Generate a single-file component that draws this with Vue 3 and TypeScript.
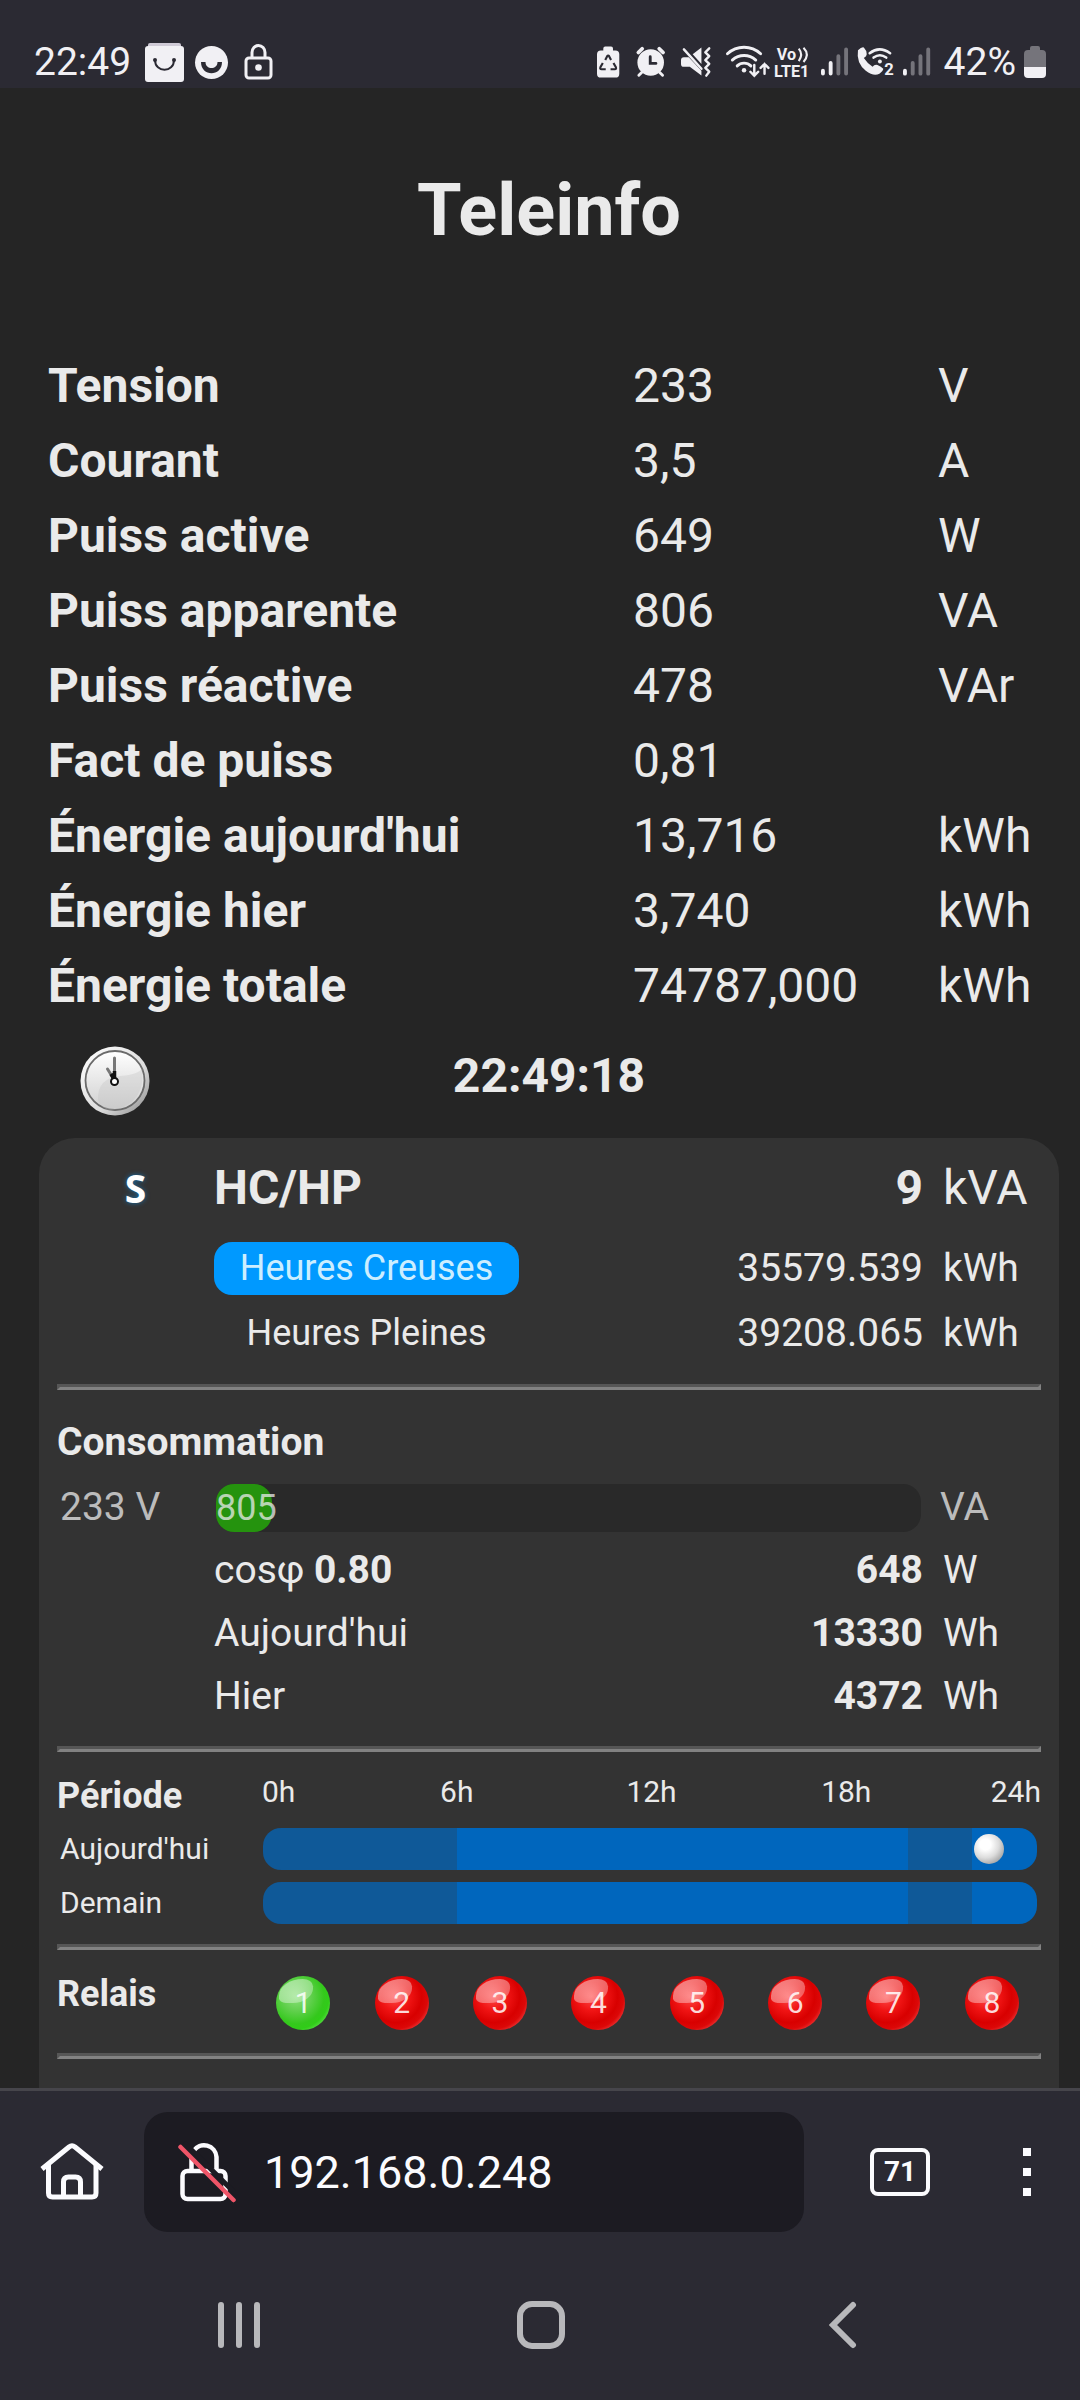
<script setup lang="ts">
import { ref } from 'vue'

interface Reading { label: string; value: string; unit: string }
interface Segment { kind: 'low' | 'high'; hours: number }

const readings: Reading[] = [
  { label: 'Tension', value: '233', unit: 'V' },
  { label: 'Courant', value: '3,5', unit: 'A' },
  { label: 'Puiss active', value: '649', unit: 'W' },
  { label: 'Puiss apparente', value: '806', unit: 'VA' },
  { label: 'Puiss réactive', value: '478', unit: 'VAr' },
  { label: 'Fact de puiss', value: '0,81', unit: '' },
  { label: "Énergie aujourd'hui", value: '13,716', unit: 'kWh' },
  { label: 'Énergie hier', value: '3,740', unit: 'kWh' },
  { label: 'Énergie totale', value: '74787,000', unit: 'kWh' },
]

const tariffs = [
  { name: 'Heures Creuses', total: '35579.539', active: true },
  { name: 'Heures Pleines', total: '39208.065', active: false },
]

const loadPercent = 8

const hours = ['0h', '6h', '12h', '18h', '24h']
const schedule: Segment[] = [
  { kind: 'low', hours: 6 },
  { kind: 'high', hours: 14 },
  { kind: 'low', hours: 2 },
  { kind: 'high', hours: 2 },
]
const days = [
  { name: "Aujourd'hui", marker: 91.8 },
  { name: 'Demain', marker: null },
]

const relays = [1, 2, 3, 4, 5, 6, 7, 8].map((id) => ({ id, on: id === 1 }))

const address = ref('192.168.0.248')
</script>

<template>
  <div class="screen">
    <header class="status">
      <span class="status-time">22:49</span>
      <svg class="ic" width="39" height="36" viewBox="0 0 39 36">
        <path d="M3 3V1q0-2 2-2h29q2 0 2 2v2z" fill="#cfcad6" />
        <rect y="2" width="39" height="36" rx="3" fill="#f1f0f4" />
        <path d="M10 16C10 29 29 29 29 16" fill="none" stroke="#2b2a33" stroke-width="2" />
        <circle cx="10" cy="16" r="2" fill="#2b2a33" />
        <circle cx="29" cy="16" r="2" fill="#2b2a33" />
      </svg>
      <svg class="ic" width="37" height="36" viewBox="0 0 37 36">
        <circle cx="19.500" cy="18.500" r="16.500" fill="#f1f0f4" />
        <path d="M9 18H13.500C13.500 26 25.500 26 25.500 18H30C30 33 9 33 9 18Z" fill="#2b2a33" />
      </svg>
      <svg class="ic" width="36" height="36" viewBox="0 0 36 36" fill="none" stroke="#f1f0f4" stroke-width="3">
        <rect x="9" y="14" width="25" height="20" rx="3" />
        <path d="M15 13V8.500a6.500 7 0 0 1 13 0V13" />
        <circle cx="21.500" cy="23.500" r="3.300" fill="#f1f0f4" stroke="none" />
      </svg>
      <span class="spacer"></span>
      <svg class="ic" width="31" height="36" viewBox="0 0 32 36">
        <path d="M6.500 6V4q0-2 2-2h6q2 0 2 2v2H19q4 0 4 4v20q0 4-4 4H4q-4 0-4-4V10q0-4 4-4z" fill="#f1f0f4" />
        <path d="M8.500 16l2-4q1-1.500 2 0l2 4M17 19l2.500 4.500q.8 2-1.200 2h-4.300M9 25.500H4.700q-2 0-1.200-2L6 19" fill="none" stroke="#2b2a33" stroke-width="2.200" />
      </svg>
      <svg class="ic" width="37" height="36" viewBox="0 0 39 36" fill="none" stroke="#f1f0f4" stroke-width="4" stroke-linecap="round">
        <circle cx="15.500" cy="18.500" r="14" fill="#f1f0f4" stroke="none" />
        <path d="M2.500 8l4-4M28.500 8l-4-4" />
        <path d="M6 29l-3 3M25 29l3 3" stroke-width="3" />
        <path d="M15 12.500v7h6" stroke="#2b2a33" stroke-width="3" />
      </svg>
      <svg class="ic" width="36" height="36" viewBox="0 0 37 36">
        <path d="M0 16q0-3 3-3h5l13 14v5L9 23H3q-3 0-3-3zM12 10l9-7v17z" fill="#f1f0f4" />
        <path d="M3 5l18 20" stroke="#f1f0f4" stroke-width="2.500" stroke-linecap="round" />
        <path d="M29 4l-4 4 4 4-4 4 4 4-4 4 4 4-3 4" fill="none" stroke="#f1f0f4" stroke-width="2.500" stroke-linejoin="round" stroke-linecap="round" />
      </svg>
      <svg class="ic" width="41" height="36" viewBox="0 0 42 36" fill="none" stroke="#f1f0f4" stroke-width="3" stroke-linecap="round">
        <path d="M2.500 9.500A25 25 0 0 1 36.500 9.500M7.500 16A18 18 0 0 1 31.500 16M12.500 22A10 10 0 0 1 26.500 22" />
        <circle cx="19.500" cy="26.500" r="2.300" fill="#f1f0f4" stroke="none" />
        <path d="M30 21v11m-4-4l4 4 4-4M40.500 30V20m-4 4l4-4 4 4" stroke-width="2.500" />
      </svg>
      <svg class="ic" width="39" height="36" viewBox="0 0 41 36" fill="#f1f0f4">
        <text x="3" y="16" class="tiny">Vo</text>
        <text x="0" y="34" class="tiny">LTE1</text>
        <path d="M26 4q5 6 0 13M31 3q7 7 0 15" fill="none" stroke="#f1f0f4" stroke-width="2.200" />
      </svg>
      <svg class="ic" width="28" height="36" viewBox="0 0 29 36" stroke="#f1f0f4" stroke-width="4" stroke-linecap="round">
        <path d="M2 27v3M10 19v11" />
        <path d="M18 12v18M26 5v25" stroke="#75747b" />
      </svg>
      <svg class="ic" width="38" height="36" viewBox="0 0 39 36" fill="none" stroke="#f1f0f4" stroke-width="2.600">
        <path d="M1 6q4-4 6-3 3 3 3 7 0 2-3 4 4 6 9 9 2-3 5-2 3 1 6 4 0 2-4 5-6 3-14-3Q-1 19 1 6z" fill="#f1f0f4" stroke="none" />
        <path d="M13 9q10-8 21 0M17 13.500q6.500-5 13 0" stroke-linecap="round" />
        <circle cx="23.500" cy="17.500" r="2" fill="#f1f0f4" stroke="none" />
        <text x="28" y="31" class="tiny two">2</text>
      </svg>
      <svg class="ic" width="33" height="36" viewBox="0 0 34 36" stroke="#75747b" stroke-width="4" stroke-linecap="round">
        <path d="M2 27v3" stroke="#f1f0f4" />
        <path d="M10 19v11M18 12v18M26 5v25" />
      </svg>
      <span class="status-percent">42%</span>
      <svg class="ic" width="22" height="36" viewBox="0 0 22 36">
        <path d="M6 6V4q0-2 2-2h6q2 0 2 2v2h2q4 0 4 4v13H0V10q0-4 4-4z" fill="#75747b" />
        <path d="M0 23h22v7q0 4-4 4H4q-4 0-4-4z" fill="#f1f0f4" />
      </svg>
    </header>

    <main class="page">
      <h1>Teleinfo</h1>

      <table class="readings">
        <colgroup><col /><col class="c-value" /><col class="c-unit" /></colgroup>
        <tbody>
          <tr v-for="r in readings" :key="r.label">
            <th scope="row">{{ r.label }}</th>
            <td>{{ r.value }}</td>
            <td>{{ r.unit }}</td>
          </tr>
        </tbody>
      </table>

      <div class="clock-row">
        <svg class="clock" width="70" height="70" viewBox="0 0 70 70" aria-hidden="true">
          <defs>
            <linearGradient id="rim" x1="0" y1="0" x2="1" y2="1">
              <stop offset="0" stop-color="#fff" /><stop offset=".6" stop-color="#ddd" /><stop offset="1" stop-color="#888" />
            </linearGradient>
            <linearGradient id="face" x1="0" y1="0" x2="0" y2="1">
              <stop offset="0" stop-color="#fff" /><stop offset="1" stop-color="#cfcfcf" />
            </linearGradient>
          </defs>
          <circle cx="35" cy="35" r="34.500" fill="url(#rim)" />
          <circle cx="35" cy="34.500" r="29.500" fill="url(#face)" stroke="#6a6a6a" stroke-width="1.800" />
          <path d="M18 54Q17 32 40 30T62 20Q66 50 45 60T18 54z" fill="#c4c4c4" opacity=".35" />
          <path d="M34.500 31V12M32.500 31L27.500 23" stroke="#777" stroke-width="3" stroke-linecap="round" />
          <path d="M34.500 34V25M34.500 34L31 28" stroke="#111" stroke-width="3.500" />
          <circle cx="34.500" cy="35.500" r="3.500" fill="#fff" stroke="#111" stroke-width="2" />
        </svg>
        <strong class="time">22:49:18</strong>
      </div>

      <section class="panel">
        <table class="grid">
          <colgroup><col class="g-side" /><col /><col /><col class="g-unit" /></colgroup>
          <tbody>
            <tr class="contract">
              <td class="mark">S</td>
              <th scope="row">HC/HP</th>
              <td class="num strong">9</td>
              <td class="unit">kVA</td>
            </tr>
            <tr v-for="t in tariffs" :key="t.name" class="tariff">
              <td></td>
              <td><span class="pill" :class="{ active: t.active }">{{ t.name }}</span></td>
              <td class="num">{{ t.total }}</td>
              <td class="unit">kWh</td>
            </tr>
          </tbody>
        </table>

        <hr />

        <h2 class="title">Consommation</h2>
        <table class="grid">
          <colgroup><col class="g-side" /><col /><col /><col class="g-unit" /></colgroup>
          <tbody>
            <tr>
              <td class="phase">233 V</td>
              <td colspan="2">
                <div class="bar"><div class="fill" :style="{ width: loadPercent + '%' }">805</div></div>
              </td>
              <td class="unit dim">VA</td>
            </tr>
            <tr><td></td><td>cosφ <b>0.80</b></td><td class="num strong">648</td><td class="unit">W</td></tr>
            <tr><td></td><td>Aujourd'hui</td><td class="num strong">13330</td><td class="unit">Wh</td></tr>
            <tr><td></td><td>Hier</td><td class="num strong">4372</td><td class="unit">Wh</td></tr>
          </tbody>
        </table>

        <hr />

        <div class="period">
          <div class="period-head">
            <h2>Période</h2>
            <div class="hours"><span v-for="h in hours" :key="h">{{ h }}</span></div>
          </div>
          <div v-for="d in days" :key="d.name" class="day">
            <span class="day-name">{{ d.name }}</span>
            <div class="track">
              <span
                v-for="(s, i) in schedule"
                :key="i"
                class="slot"
                :class="s.kind"
                :style="{ width: (s.hours / 24) * 100 + '%' }"
              ></span>
              <span v-if="d.marker !== null" class="marker" :style="{ left: d.marker + '%' }"></span>
            </div>
          </div>
        </div>

        <hr />

        <div class="relays">
          <h2>Relais</h2>
          <ul>
            <li v-for="r in relays" :key="r.id"><span class="led" :class="{ on: r.on }"><i>{{ r.id }}</i></span></li>
          </ul>
        </div>

        <hr />
      </section>
    </main>

    <footer>
      <div class="toolbar">
        <button class="home" type="button" aria-label="Accueil">
          <svg width="64" height="58" viewBox="0 0 64 58" fill="none" stroke="#fbfbfe" stroke-width="5">
            <path d="M2 26L29 4q3-2.500 6 0L62 26" />
            <path d="M8.500 22V50q0 4 4 4H52q4 0 4-4V22M23.500 54V39q0-5 5-5h7q5 0 5 5V54" />
          </svg>
        </button>
        <label class="url">
          <svg width="58" height="62" viewBox="0 0 58 62" fill="none" stroke="#fbfbfe" stroke-width="4.500">
            <rect x="4.500" y="30" width="43" height="28" rx="5" />
            <path d="M13.500 30V17M15.500 10A12.500 12.500 0 0 1 38.500 16V30" />
            <path d="M6 1.500L61 56" stroke="#1c1b22" stroke-width="5" />
            <path d="M2.500 6L55.500 59" stroke="#ef5568" stroke-width="4.500" stroke-linecap="round" />
          </svg>
          <input v-model="address" type="text" aria-label="Adresse" />
        </label>
        <button class="tabs" type="button" aria-label="Onglets"><span>71</span></button>
        <button class="menu" type="button" aria-label="Menu"><i></i><i></i><i></i></button>
      </div>
      <nav class="system">
        <button type="button" aria-label="Récents">
          <svg width="42" height="48" viewBox="0 0 42 48" stroke="#b8b8bb" stroke-width="6" stroke-linecap="round"><path d="M3 4v40M21 4v40M39 4v40" /></svg>
        </button>
        <button type="button" aria-label="Écran d'accueil">
          <svg width="48" height="48" viewBox="0 0 48 48" fill="none" stroke="#b8b8bb" stroke-width="6"><rect x="3" y="3" width="42" height="42" rx="12" /></svg>
        </button>
        <button type="button" aria-label="Retour">
          <svg width="28" height="48" viewBox="0 0 28 48" fill="none" stroke="#b8b8bb" stroke-width="6" stroke-linecap="round"><path d="M24 4L4 24l20 20" /></svg>
        </button>
      </nav>
    </footer>
  </div>
</template>

<style>
body {
  background: #252525;
}
</style>

<style scoped>
.screen {
  display: flex;
  flex-direction: column;
  min-height: 100vh;
  background: #252525;
  color: #eaeaea;
  font-family: Roboto, 'Liberation Sans', sans-serif;
  font-size: 39px;
}
button {
  display: flex;
  align-items: center;
  justify-content: center;
  padding: 0;
  border: 0;
  background: none;
  color: inherit;
  font-family: inherit;
}

/* Status bar */
.status {
  display: flex;
  align-items: center;
  gap: 8px;
  height: 52px;
  padding: 36px 34px 0;
  background: #2b2a33;
  color: #f1f0f4;
  line-height: 46px;
}
.status-time {
  margin-right: 6px;
}
.spacer {
  flex: 1;
}
.ic {
  flex: none;
  overflow: visible;
}
.tiny {
  font-size: 17px;
  font-weight: 700;
}
.two {
  fill: #f1f0f4;
  stroke: #2b2a33;
  stroke-width: 3px;
  paint-order: stroke;
}

/* Page */
.page {
  flex: 1;
  display: flex;
  flex-direction: column;
  padding: 81px 21px 0 39px;
}
h1 {
  margin: 0 0 95px;
  font-size: 72px;
  line-height: 84px;
  text-align: center;
}
.readings {
  width: 100%;
  table-layout: fixed;
  border-collapse: collapse;
  font-size: 48px;
  line-height: 75px;
}
.readings th,
.readings td {
  padding: 0 0 0 9px;
  text-align: left;
  white-space: nowrap;
}
.c-value {
  width: 305px;
}
.c-unit {
  width: 130px;
}
.clock-row {
  display: grid;
  grid-template-columns: 1fr auto 1fr;
  padding: 15px 0 22px;
}
.clock {
  margin: 8px 0 0 41px;
}
.time {
  font-size: 48px;
  line-height: 75px;
}

/* Panel */
.panel {
  flex: 1;
  padding: 12px 18px 0;
  border-radius: 36px 36px 0 0;
  background: #333;
}
hr {
  height: 0;
  margin: 18px 0 19px;
  border: 3px solid;
  border-color: #565656 #828282 #828282 #565656;
}
h2 {
  margin: 0;
  font-size: 36px;
  line-height: 50px;
}
h2.title {
  font-size: 39px;
  line-height: 67px;
}
.grid {
  width: 100%;
  table-layout: fixed;
  border-collapse: collapse;
}
.g-side {
  width: 157px;
}
.g-unit {
  width: 118px;
}
.grid td,
.grid th {
  padding: 0;
  line-height: 63px;
  text-align: left;
  white-space: nowrap;
}
.grid .contract th,
.grid .contract td {
  padding-bottom: 11px;
  font-size: 48px;
  line-height: 75px;
}
.grid .contract .mark {
  font-family: 'Open Sans', 'Noto Sans', sans-serif;
  font-size: 39px;
  font-weight: 700;
  text-align: center;
  color: #fff;
  text-shadow: 0 0 5px rgba(0, 153, 255, 0.6);
}
.grid .tariff td {
  height: 65px;
  line-height: 53px;
}
.grid .num {
  text-align: right;
}
.strong {
  font-weight: 700;
}
.grid .unit {
  padding-left: 20px;
}
.grid .dim {
  padding-left: 17px;
}
.dim,
.phase {
  color: #bcbcbc;
}
.grid .phase {
  padding-left: 3px;
}
.pill {
  display: block;
  width: 305px;
  border-radius: 18px;
  font-size: 36px;
  text-align: center;
}
.pill.active {
  background: #0099ff;
  color: #cceeff;
}
.bar {
  height: 48px;
  margin: 0 2px;
  border-radius: 18px;
  background: #292929;
}
.fill {
  border-radius: 18px;
  background: #25930e;
  color: rgba(234, 234, 234, 0.75);
  font-size: 36px;
  line-height: 48px;
}

/* Period */
.period {
  padding-bottom: 2px;
}
.period-head {
  display: grid;
  grid-template-columns: 205px 1fr;
  height: 57px;
}
.hours {
  display: grid;
  grid-template-columns: 1fr 2fr 2fr 2fr 1fr;
  font-size: 30px;
  line-height: 42px;
  text-align: center;
}
.hours span:first-child {
  text-align: left;
}
.hours span:last-child {
  text-align: right;
}
.day {
  display: grid;
  grid-template-columns: 203px 1fr;
  padding: 0 4px 0 3px;
  font-size: 30px;
  line-height: 42px;
}
.day + .day {
  margin-top: 12px;
}
.track {
  position: relative;
  display: flex;
  overflow: hidden;
  border-radius: 18px;
}
.low {
  background: #0f5998;
}
.high {
  background: #0066bd;
}
.marker {
  position: absolute;
  top: 6px;
  width: 30px;
  height: 30px;
  border-radius: 50%;
  background: radial-gradient(circle at 38% 35%, #fff 20%, #dcdcdc 50%, #aaa 75%, #d0d0d0 100%);
}

/* Relays */
.relays {
  display: grid;
  grid-template-columns: 197px 1fr;
  height: 66px;
}
.relays ul {
  display: grid;
  grid-template-columns: repeat(8, 1fr);
  justify-items: center;
  margin: 0;
  padding: 7px 0 0;
  list-style: none;
}
.led {
  position: relative;
  display: block;
  width: 54px;
  height: 54px;
  border-radius: 50%;
  background: radial-gradient(circle at 38% 38%, #ff4a4a 0%, #f01414 30%, #d80000 55%, #dc0808 68%, #ff6c6c 92%);
  font-size: 30px;
  line-height: 54px;
  text-align: center;
}
.led.on {
  background: radial-gradient(circle at 38% 38%, #8ce07c 0%, #62d04e 30%, #34c81c 58%, #30cc18 68%, #86ee76 92%);
}
.led::before {
  content: '';
  position: absolute;
  top: 3px;
  left: 3px;
  width: 34px;
  height: 24px;
  border-radius: 70% 30% 60% 20%;
  background: linear-gradient(140deg, rgba(255, 255, 255, 0.5), rgba(255, 255, 255, 0.28));
}
.led i {
  position: relative;
  font-style: normal;
  color: rgba(255, 255, 255, 0.85);
}

/* Browser toolbar */
footer {
  background: #2b2a33;
}
.toolbar {
  display: flex;
  padding: 21px 22px 21px 0;
  border-top: 3px solid #46454b;
}
.home {
  width: 144px;
}
.url {
  flex: 1;
  display: flex;
  align-items: center;
  gap: 28px;
  min-width: 0;
  height: 120px;
  padding: 0 34px;
  box-sizing: border-box;
  border-radius: 24px;
  background: #1c1b22;
}
.url svg {
  flex: none;
}
.url input {
  flex: 1;
  min-width: 0;
  padding: 0;
  border: 0;
  outline: 0;
  background: none;
  color: #fbfbfe;
  font-family: inherit;
  font-size: 45px;
}
.tabs {
  width: 192px;
}
.tabs span {
  width: 52px;
  border: 4px solid #fbfbfe;
  border-radius: 8px;
  color: #fbfbfe;
  font-size: 28px;
  font-weight: 700;
  line-height: 40px;
}
.menu {
  flex-direction: column;
  gap: 12px;
  width: 62px;
}
.menu i {
  width: 8px;
  height: 8px;
  background: #fbfbfe;
}
.system {
  display: grid;
  grid-template-columns: repeat(3, 1fr);
  box-sizing: border-box;
  height: 147px;
  padding: 0 86px 3px 88px;
}
</style>
